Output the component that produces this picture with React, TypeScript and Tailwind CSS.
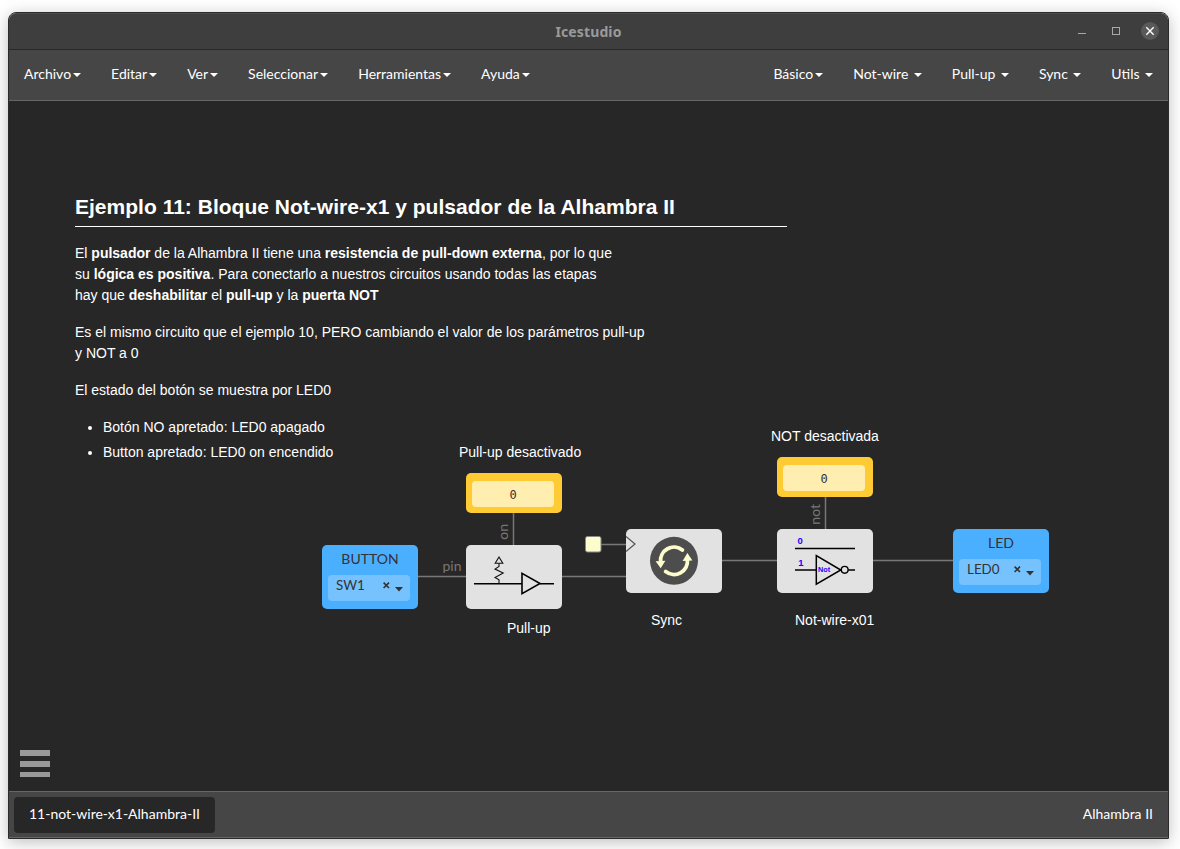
import type { ReactNode } from "react";

const Caret = ({ gap = "ml-[2px]" }: { gap?: string }) => (
  <span className={`${gap} mt-[3px] inline-block h-0 w-0 border-x-4 border-t-4 border-x-transparent border-t-white align-middle`} />
);

const MenuItem = ({ label, wide }: { label: string; wide?: boolean }) => (
  <li className="flex items-center px-[15px] whitespace-nowrap">
    <span>{label}</span>
    <Caret gap={wide ? "ml-[5.5px]" : "ml-[2px]"} />
  </li>
);

function TitleBar() {
  return (
    <header className="relative flex h-[36px] shrink-0 items-center justify-end rounded-t-[7px] border-t border-[#4c4c4c] bg-[#3e3e3e] pr-[9px] pb-[1px]">
      <h1 className="absolute inset-x-0 top-[8px] text-center font-['Noto_Sans',sans-serif] text-[14px] leading-[20px] font-bold tracking-[0.12px] text-[#9a9a9a]">
        Icestudio
      </h1>
      <div className="flex items-center">
        <svg width="9" height="18" viewBox="0 0 9 18" className="mr-[25px] text-[#a8a8a8]">
          <path d="M0 11.5h8" stroke="currentColor" />
        </svg>
        <svg width="9" height="18" viewBox="0 0 9 18" className="mr-5 text-[#a8a8a8]">
          <rect x="0.5" y="5.5" width="7" height="7" fill="none" stroke="currentColor" />
        </svg>
        <svg width="18" height="18" viewBox="0 0 18 18">
          <circle cx="9" cy="9" r="9" fill="#595959" />
          <path d="M5.3 5.3l7.4 7.4M12.7 5.3l-7.4 7.4" stroke="#fff" strokeWidth="1.4" />
        </svg>
      </div>
    </header>
  );
}

function MenuBar() {
  return (
    <nav className="flex h-[52px] shrink-0 justify-between border-t border-b border-t-[#282828] border-b-[#666] bg-[#464646] pb-[4px] text-[14px] text-white">
      <ul className="flex">
        <MenuItem label="Archivo" />
        <MenuItem label="Editar" />
        <MenuItem label="Ver" />
        <MenuItem label="Seleccionar" />
        <MenuItem label="Herramientas" />
        <MenuItem label="Ayuda" />
      </ul>
      <ul className="flex">
        <MenuItem label="Básico" />
        <MenuItem label="Not-wire" wide />
        <MenuItem label="Pull-up" wide />
        <MenuItem label="Sync" wide />
        <MenuItem label="Utils" wide />
      </ul>
    </nav>
  );
}

function Notes() {
  return (
    <article className="absolute top-[93px] left-[66px] w-[712px] font-['Liberation_Sans',sans-serif] text-[14px] leading-[21px] text-white">
      <h2 className="mb-4 h-[33px] border-b border-white text-[21px] leading-[26px] font-bold tracking-[0.015px]">
        Ejemplo 11: Bloque Not-wire-x1 y pulsador de la Alhambra II
      </h2>
      <p className="mb-4">
        El <b>pulsador</b> de la Alhambra II tiene una <b>resistencia de pull-down externa</b>, por lo que
        <br />
        su <b>lógica es positiva</b>. Para conectarlo a nuestros circuitos usando todas las etapas
        <br />
        hay que <b>deshabilitar</b> el <b>pull-up</b> y la <b>puerta NOT</b>
      </p>
      <p className="mb-4">
        Es el mismo circuito que el ejemplo 10, PERO cambiando el valor de los parámetros pull-up
        <br />y NOT a 0
      </p>
      <p className="mb-4">El estado del botón se muestra por LED0</p>
      <ul className="list-disc space-y-1 pl-7">
        <li>Botón NO apretado: LED0 apagado</li>
        <li>Button apretado: LED0 on encendido</li>
      </ul>
    </article>
  );
}

const Label = ({ at, children }: { at: string; children: ReactNode }) => (
  <p className={`absolute ${at} font-['Liberation_Sans',sans-serif] text-[14px] leading-[21px] whitespace-nowrap text-white`}>
    {children}
  </p>
);

const PinBlock = ({ at, title, pin }: { at: string; title: string; pin: string }) => (
  <div className={`absolute ${at} flex h-16 w-24 flex-col rounded-[5px] bg-[#4bafff] pr-[8px] pl-[6px] text-[#333]`}>
    <div className="-mr-[2px] h-[30px] text-center text-[14px] leading-[27px]">{title}</div>
    <div className="flex h-[26px] items-center rounded-[4px] bg-[#76c2ff] pr-[7px] pb-[6px] pl-[8px] text-[13.4px]">
      <span className="flex-1">{pin}</span>
      <svg width="7" height="7" viewBox="0 0 7 7" className="mr-[5px]">
        <path d="M0.6 0.6l5.4 5.4M6 0.6l-5.4 5.4" stroke="#333" strokeWidth="1.6" />
      </svg>
      <svg width="8" height="5" viewBox="0 0 8 5" className="mt-[9px]">
        <path d="M0 0h8l-4 4.5z" fill="#333" />
      </svg>
    </div>
  </div>
);

const ConstantBlock = ({ at, value }: { at: string; value: string }) => (
  <div className={`absolute ${at} flex h-10 w-24 rounded-[5px] bg-[#ffcb35] pt-[8px] pr-[8px] pb-[6px] pl-[6px]`}>
    <div className="flex-1 rounded-[4px] bg-[#ffeeb0] pt-[1px] text-center font-['DejaVu_Sans_Mono',monospace] text-[12px] leading-[26px] text-[#333]">
      {value}
    </div>
  </div>
);

const GenericBlock = ({ at, children }: { at: string; children: ReactNode }) => (
  <div className={`absolute ${at} h-16 w-24 rounded-[5px] bg-[#e2e2e2]`}>
    <svg width="96" height="64" viewBox="0 0 96 64" fill="none">
      {children}
    </svg>
  </div>
);

function Canvas() {
  return (
    <main className="relative min-h-0 flex-1 overflow-hidden bg-[#272727]">
      <Notes />
      <svg className="absolute inset-0" width="1159" height="690" viewBox="0 0 1159 690" fill="none" stroke="#777" strokeWidth="1.5">
        <path d="M409 475.4h48M553 475.4h64M713 459.4h55M864 459.4h80M592 443.4h25" />
        <path d="M504.5 412v32M816.5 396v32" />
        <rect x="576.5" y="435.5" width="15.5" height="15.5" rx="2" fill="#fcfccd" stroke="#888" strokeWidth="1" />
      </svg>

      <span className="absolute top-[455px] left-[433.5px] text-[14px] leading-[20px] text-[#777]">pin</span>
      <span className="absolute top-[423px] left-[484px] rotate-180 text-[14px] leading-[20px] text-[#777] [writing-mode:vertical-rl]">on</span>
      <span className="absolute top-[403px] left-[796px] rotate-180 text-[14px] leading-[20px] text-[#777] [writing-mode:vertical-rl]">not</span>

      <Label at="top-[341px] left-[450px]">Pull-up desactivado</Label>
      <Label at="top-[325px] left-[762px]">NOT desactivada</Label>
      <Label at="top-[517px] left-[498px]">Pull-up</Label>
      <Label at="top-[509px] left-[642px]">Sync</Label>
      <Label at="top-[509px] left-[786px]">Not-wire-x01</Label>

      <PinBlock at="top-[444px] left-[313px]" title="BUTTON" pin="SW1" />
      <ConstantBlock at="top-[372px] left-[457px]" value="0" />
      <GenericBlock at="top-[444px] left-[457px]">
        <path d="M8 38.7h48M74 38.7h14" stroke="#000" strokeWidth="1.5" />
        <path d="M56 28.3v20.4l18-10.2z" stroke="#000" strokeWidth="1.6" />
        <path d="M33 38.5v-3.6l-4-2.4 8.2-4.4-8.2-4 4-2.6V18M33 12l-3.8 6.2h7.6z" stroke="#111" strokeWidth="1.1" />
      </GenericBlock>

      <GenericBlock at="top-[428px] left-[617px]">
        <path d="M0 7.5l9 7.5-9 7.5" stroke="#555" strokeWidth="1.2" />
        <circle cx="48" cy="31.8" r="24" fill="#4d4d4d" />
        <path d="M56.4 21A13.5 13.5 0 0 0 34.6 33M39.6 42.6A13.5 13.5 0 0 0 61.4 30.6" stroke="#fcfccd" strokeWidth="3.8" strokeLinecap="round" />
        <path d="M29.6 32.3l9.8-.6-4.7 7.6zM56.6 32l9.8-.4-5-7.6z" fill="#fcfccd" />
      </GenericBlock>

      <ConstantBlock at="top-[356px] left-[768px]" value="0" />
      <GenericBlock at="top-[428px] left-[768px]">
        <path d="M18 19.6h60M18 41h21M71 41h7" stroke="#000" strokeWidth="1.5" />
        <path d="M39.3 26.5v28.6L63.8 41z" stroke="#000" strokeWidth="1.5" />
        <circle cx="67.7" cy="40.8" r="3.4" stroke="#000" strokeWidth="1.4" />
        <g fill="#2a00ff" className="font-['Liberation_Sans',sans-serif] font-bold">
          <text x="20.6" y="15" fontSize="9.5">0</text>
          <text x="21.2" y="37" fontSize="9.5">1</text>
          <text x="41" y="43" fontSize="7.3">Not</text>
        </g>
      </GenericBlock>
      <PinBlock at="top-[428px] left-[944px]" title="LED" pin="LED0" />

      <button aria-label="Menu" className="absolute bottom-[14px] left-[11px] flex w-[30px] flex-col gap-[5px]">
        <span className="h-[6px] bg-[#999]" />
        <span className="h-[6px] bg-[#999]" />
        <span className="h-[5px] bg-[#999]" />
      </button>
    </main>
  );
}

function StatusBar() {
  return (
    <footer className="flex h-[47px] shrink-0 items-center justify-between border-y border-[#666] bg-[#464646] pr-[15px] pl-[5px] text-[14px] text-white">
      <div className="flex h-9 w-[201px] items-center justify-center rounded-[4px] bg-[#272727] pb-[2px]">
        11-not-wire-x1-Alhambra-II
      </div>
      <div className="pb-[2px]">Alhambra II</div>
    </footer>
  );
}

export default function App() {
  return (
    <div className="h-[849px] w-[1180px] overflow-hidden bg-white pt-[12px] pl-[8px] font-['Lato',sans-serif]">
      <div className="flex h-[827px] w-[1161px] flex-col rounded-t-[8px] border border-[#2b2b2b] shadow-[0_3px_16px_rgba(0,0,0,0.26)]">
        <TitleBar />
        <MenuBar />
        <Canvas />
        <StatusBar />
      </div>
    </div>
  );
}
